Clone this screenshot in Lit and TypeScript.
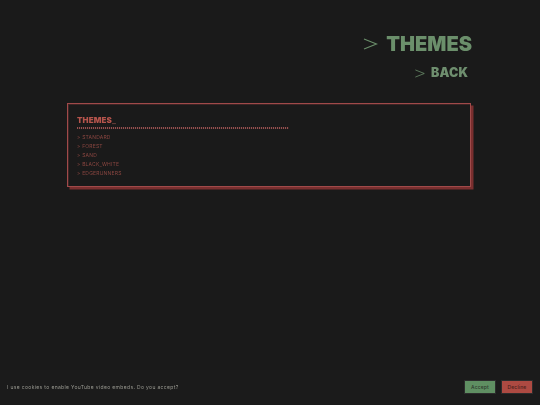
import { LitElement, html, css } from "lit";
import { customElement } from "lit/decorators.js";

const THEMES = ["STANDARD", "FOREST", "SAND", "BLACK_WHITE", "EDGERUNNERS"];

@customElement("app-root")
export class AppRoot extends LitElement {
  static styles = css`
    :host {
      display: flex;
      flex-direction: column;
      width: 540px;
      height: 405px;
      background: #1a1a1a;
      font-family: "DejaVu Sans", sans-serif;
      overflow: hidden;
    }
    .nav {
      display: flex;
      flex-direction: column;
      align-items: flex-end;
      padding: 32px 68px 0 0;
      color: #6b8f6b;
    }
    .nav-row {
      display: flex;
      align-items: center;
    }
    .title {
      height: 24px;
      gap: 8px;
    }
    .title .text {
      font: 900 20px/24px "Inter", sans-serif;
      letter-spacing: 0;
      color: #6b8f6b;
      filter: blur(0.35px);
    }
    .back {
      height: 16px;
      margin-top: 9px;
      margin-right: 4px;
      gap: 6px;
    }
    .back .text {
      font: 900 12.5px/16px "Inter", sans-serif;
      letter-spacing: 0.1px;
      color: #6f8f6f;
      filter: blur(0.3px);
    }
    svg { display: block; }
    .panel {
      margin: 22px 0 0 67px;
      width: 404px;
      height: 84px;
      box-sizing: border-box;
      border: 1px solid #a04a4a;
      box-shadow: inset 1px 1px 0 #3e2424, 2.5px 2.5px 0 #7a2f2f;
      padding: 10px 9px 0;
    }
    .panel h1 {
      margin: 0;
      font: 900 8px/12px "Inter", sans-serif;
      letter-spacing: 0.1px;
      color: #b5544c;
      filter: blur(0.25px);
    }
    .panel h1 span {
      color: #5f3a36;
    }
    .rule {
      width: 212px;
      height: 2px;
      background: repeating-linear-gradient(90deg, #94504f 0 1.2px, #2c2020 1.2px 2px);
      margin: 1px 0 4px;
    }
    .panel ul {
      list-style: none;
      margin: 0;
      padding: 0;
      filter: blur(0.3px);
    }
    .panel li {
      font: 400 5px/9px "Inter", sans-serif;
      letter-spacing: 0.2px;
      color: #8a4640;
    }
    .spacer { flex: 1; }
    .cookie {
      height: 34px;
      display: flex;
      align-items: center;
      justify-content: space-between;
      padding: 0 7px;
      margin-bottom: 1px;
      background: #1b1b1b;
    }
    .cookie p {
      margin: 0;
      font: 400 5px/8px "Inter", sans-serif;
      letter-spacing: 0.35px;
      color: #9a9a92;
      filter: blur(0.25px);
    }
    .buttons {
      display: flex;
      gap: 5px;
    }
    .buttons button {
      width: 32px;
      height: 14px;
      padding: 0;
      border: 1px solid #2c2c2c;
      font: 500 5px/12px "Inter", sans-serif;
      letter-spacing: 0.15px;
      color: #2e3a2e;
    }
    .accept { background: #5f8f62; }
    .buttons .decline { background: #ad4a42; color: #4a1f1b; }
  `;

  private chevron(w: number, h: number) {
    return html`<svg width=${w} height=${h} viewBox="0 0 14 12" fill="none" stroke="#6b8f6b" stroke-width="1.1">
      <path d="M0.5 1 L13 6 L0.5 11"></path>
    </svg>`;
  }

  render() {
    return html`
      <div class="nav">
        <div class="nav-row title">${this.chevron(15, 12)}<span class="text">THEMES</span></div>
        <div class="nav-row back">${this.chevron(10, 9)}<span class="text">BACK</span></div>
      </div>
      <section class="panel">
        <h1>THEMES<span>_</span></h1>
        <div class="rule"></div>
        <ul>${THEMES.map((t) => html`<li>&gt; ${t}</li>`)}</ul>
      </section>
      <div class="spacer"></div>
      <footer class="cookie">
        <p>I use cookies to enable YouTube video embeds. Do you accept?</p>
        <div class="buttons">
          <button class="accept">Accept</button>
          <button class="decline">Decline</button>
        </div>
      </footer>
    `;
  }
}
